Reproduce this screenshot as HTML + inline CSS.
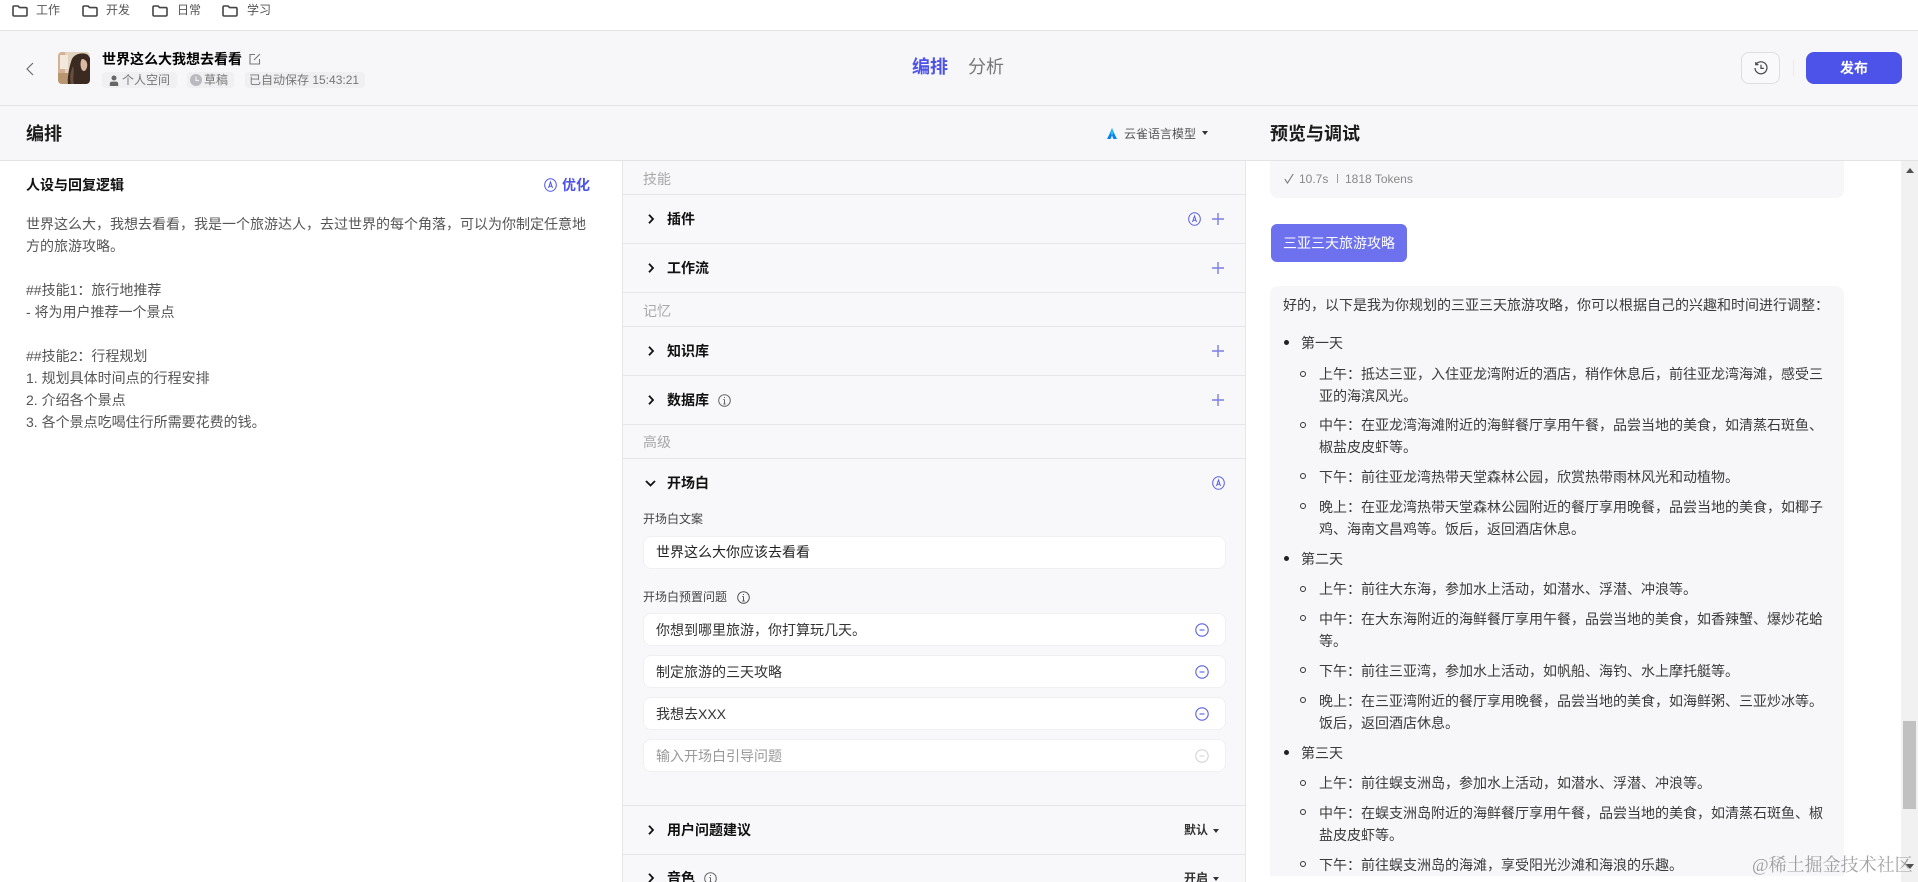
<!DOCTYPE html>
<html lang="zh"><head><meta charset="utf-8"><title>编排</title>
<style>
*{box-sizing:border-box}
html,body{margin:0;padding:0;width:1918px;height:882px;overflow:hidden;background:#fff}
body{position:relative;font-family:"Liberation Sans","Noto Sans CJK SC",sans-serif;font-size:14px;color:#333}
.b{position:absolute}
.t{position:absolute;white-space:nowrap;line-height:22px;height:22px}
.f{font-size:12px;color:#555}
.h{font-weight:700;color:#111}
.l{color:#a8a8a8}
.p{color:#555}
.c{color:#3a3a3a}
.hr{position:absolute;left:623px;width:623px;height:1px;background:#e6e6ea}
.inp{position:absolute;left:643px;width:583px;height:33px;background:#fff;border:1px solid #f0f0f3;border-radius:8px}
svg{position:absolute;overflow:visible}
.dot{position:absolute;width:5px;height:5px;border-radius:50%;background:#222}
.cir{position:absolute;width:6px;height:6px;border-radius:50%;border:1px solid #333}
</style></head><body>

<!-- bookmarks bar -->
<div class="b" style="left:0;top:30px;width:1918px;height:1px;background:#e3e3e6"></div>
<svg style="left:12px;top:5px" width="16" height="12" viewBox="0 0 16 12" fill="none" stroke="#444" stroke-width="1.6" stroke-linejoin="round"><path d="M1 2.2Q1 1 2.2 1H6L7.6 2.6H13.8Q15 2.6 15 3.8V9.8Q15 11 13.8 11H2.2Q1 11 1 9.8Z"/></svg>
<span class="t f" style="left:36px;top:-1px">工作</span>
<svg style="left:82px;top:5px" width="16" height="12" viewBox="0 0 16 12" fill="none" stroke="#444" stroke-width="1.6" stroke-linejoin="round"><path d="M1 2.2Q1 1 2.2 1H6L7.6 2.6H13.8Q15 2.6 15 3.8V9.8Q15 11 13.8 11H2.2Q1 11 1 9.8Z"/></svg>
<span class="t f" style="left:106px;top:-1px">开发</span>
<svg style="left:152px;top:5px" width="16" height="12" viewBox="0 0 16 12" fill="none" stroke="#444" stroke-width="1.6" stroke-linejoin="round"><path d="M1 2.2Q1 1 2.2 1H6L7.6 2.6H13.8Q15 2.6 15 3.8V9.8Q15 11 13.8 11H2.2Q1 11 1 9.8Z"/></svg>
<span class="t f" style="left:177px;top:-1px">日常</span>
<svg style="left:222px;top:5px" width="16" height="12" viewBox="0 0 16 12" fill="none" stroke="#444" stroke-width="1.6" stroke-linejoin="round"><path d="M1 2.2Q1 1 2.2 1H6L7.6 2.6H13.8Q15 2.6 15 3.8V9.8Q15 11 13.8 11H2.2Q1 11 1 9.8Z"/></svg>
<span class="t f" style="left:247px;top:-1px">学习</span>

<!-- header -->
<div class="b" style="left:0;top:31px;width:1918px;height:129px;background:#f7f7fa"></div>
<div class="b" style="left:0;top:105px;width:1918px;height:1px;background:#e3e3e6"></div>
<div class="b" style="left:0;top:160px;width:1918px;height:1px;background:#e3e3e6"></div>

<svg style="left:26px;top:62px" width="8" height="14" viewBox="0 0 8 14" fill="none" stroke="#666" stroke-width="1.1"><path d="M7 1L1 7L7 13"/></svg>

<svg style="left:58px;top:52px;border-radius:4px;overflow:hidden" width="32" height="32" viewBox="0 0 32 32">
<rect width="32" height="32" fill="#e2d3be"/>
<rect x="0" y="0" width="7" height="32" fill="#d6b096"/>
<rect x="2" y="3" width="8" height="14" fill="#f1e9dc"/>
<rect x="0" y="21" width="10" height="11" fill="#b9966e"/>
<path d="M10 32C9 24 12 12 14 7C17 1 26 0 30 3L32 6V32Z" fill="#3a2a22"/>
<path d="M24 7C28 7 30 11 29 15C28 19 26 20 24 18C22 15 22 9 24 7Z" fill="#dcb8a2"/>
<path d="M15 14C17 20 14 26 16 32H13C11 26 13 18 15 14Z" fill="#6b4f3f"/>
</svg>

<span class="t h" style="left:102px;top:48px;color:#000">世界这么大我想去看看</span>
<svg style="left:249px;top:53px" width="12" height="12" viewBox="0 0 12 12" fill="none" stroke="#777" stroke-width="1.1"><path d="M6 1.5H1V11H10.5V6"/><path d="M5 7L11 1"/></svg>

<div class="b" style="left:102px;top:72px;width:75px;height:16px;background:#f0f0f3;border-radius:3px"></div>
<svg style="left:109px;top:75px" width="10" height="11" viewBox="0 0 10 11" fill="#666"><circle cx="5" cy="3" r="2.5"/><path d="M0.8 11V8.8Q0.8 6.6 3 6.6H7Q9.2 6.6 9.2 8.8V11Z"/></svg>
<span class="t f" style="left:122px;top:69px;color:#777">个人空间</span>
<div class="b" style="left:187px;top:72px;width:47px;height:16px;background:#f0f0f3;border-radius:3px"></div>
<svg style="left:190px;top:74px" width="12" height="12" viewBox="0 0 12 12"><circle cx="6" cy="6" r="6" fill="#b9b9bf"/><path d="M6 2.5V6.5H9" stroke="#f0f0f3" stroke-width="1.2" fill="none"/></svg>
<span class="t f" style="left:204px;top:69px;color:#777">草稿</span>
<div class="b" style="left:245px;top:72px;width:120px;height:16px;background:#f0f0f3;border-radius:3px"></div>
<span class="t f" style="left:249px;top:69px;color:#777">已自动保存 15:43:21</span>

<span class="t" style="left:912px;top:56px;font-size:18px;font-weight:700;color:#4d53e8">编排</span>
<span class="t" style="left:968px;top:56px;font-size:18px;color:#777">分析</span>

<div class="b" style="left:1741px;top:52px;width:39px;height:32px;border:1px solid #dedee2;border-radius:8px;background:#f9f9fb"></div>
<svg style="left:1754px;top:61px" width="14" height="14" viewBox="0 0 14 14" fill="none" stroke="#444" stroke-width="1.2"><path d="M2.2 3.2A6 6 0 1 1 1 7"/><path d="M1.8 1V3.6H4.4"/><path d="M7 3.8V7.4H9.8"/></svg>
<div class="b" style="left:1793px;top:60px;width:1px;height:16px;background:#ececef"></div>
<div class="b" style="left:1806px;top:52px;width:96px;height:32px;border-radius:8px;background:#4d53e8"></div>
<span class="t" style="left:1840px;top:57px;font-weight:700;color:#fff">发布</span>

<!-- panel titles -->
<span class="t" style="left:26px;top:123px;font-size:18px;font-weight:700;color:#1c1c1c">编排</span>
<svg style="left:1107px;top:128px" width="10" height="11" viewBox="0 0 11 12"><path d="M5.5 0L8 6L11 12H7L5.5 8L4 12H0L3 6Z" fill="#0a84e8"/><path d="M5.5 0L7 6L5.5 8L4 6Z" fill="#27c6f0"/></svg>
<span class="t f" style="left:1124px;top:123px;color:#555">云雀语言模型</span>
<svg style="left:1202px;top:131px" width="6" height="4" viewBox="0 0 6 4"><path d="M0 0H6L3 4Z" fill="#333"/></svg>
<span class="t" style="left:1270px;top:123px;font-size:18px;font-weight:700;color:#1c1c1c">预览与调试</span>

<!-- left column -->
<span class="t h" style="left:26px;top:174px;color:#111">人设与回复逻辑</span>
<svg style="left:544px;top:178px" width="13" height="14" viewBox="0 0 13 14" fill="none" stroke="#4d53e8" stroke-width="1"><ellipse cx="6.5" cy="7" rx="5.8" ry="6.3"/><path d="M4.5 10L6.5 4L8.5 10M5.1 8.2H7.9"/></svg>
<span class="t" style="left:562px;top:174px;font-weight:700;color:#4d53e8">优化</span>
<span class="t p" style="left:26px;top:213px">世界这么大，我想去看看，我是一个旅游达人，去过世界的每个角落，可以为你制定任意地</span>
<span class="t p" style="left:26px;top:235px">方的旅游攻略。</span>
<span class="t p" style="left:26px;top:279px">##技能1：旅行地推荐</span>
<span class="t p" style="left:26px;top:301px">- 将为用户推荐一个景点</span>
<span class="t p" style="left:26px;top:345px">##技能2：行程规划</span>
<span class="t p" style="left:26px;top:367px">1. 规划具体时间点的行程安排</span>
<span class="t p" style="left:26px;top:389px">2. 介绍各个景点</span>
<span class="t p" style="left:26px;top:411px">3. 各个景点吃喝住行所需要花费的钱。</span>

<!-- middle column -->
<div class="b" style="left:622px;top:161px;width:624px;height:721px;background:#f8f8fb;border-left:1px solid #e6e6ea;border-right:1px solid #e6e6ea"></div>
<span class="t l" style="left:643px;top:168px">技能</span>
<div class="hr" style="top:194px"></div>
<svg style="left:648px;top:214px" width="6" height="10" viewBox="0 0 6 10" fill="none" stroke="#111" stroke-width="1.8"><path d="M1 .8L5 5L1 9.2"/></svg>
<span class="t h" style="left:667px;top:208px">插件</span>
<svg style="left:1188px;top:212px" width="13" height="14" viewBox="0 0 13 14" fill="none" stroke="#5a5fe0" stroke-width="1"><ellipse cx="6.5" cy="7" rx="5.8" ry="6.3"/><path d="M4.5 10L6.5 4L8.5 10M5.1 8.2H7.9"/></svg>
<svg style="left:1212px;top:213px" width="12" height="12" viewBox="0 0 12 12" stroke="#7a7ee4" stroke-width="1.4"><path d="M6 0V12M0 6H12"/></svg>
<div class="hr" style="top:243px"></div>
<svg style="left:648px;top:263px" width="6" height="10" viewBox="0 0 6 10" fill="none" stroke="#111" stroke-width="1.8"><path d="M1 .8L5 5L1 9.2"/></svg>
<span class="t h" style="left:667px;top:257px">工作流</span>
<svg style="left:1212px;top:262px" width="12" height="12" viewBox="0 0 12 12" stroke="#7a7ee4" stroke-width="1.4"><path d="M6 0V12M0 6H12"/></svg>
<div class="hr" style="top:292px"></div>
<span class="t l" style="left:643px;top:300px">记忆</span>
<div class="hr" style="top:326px"></div>
<svg style="left:648px;top:346px" width="6" height="10" viewBox="0 0 6 10" fill="none" stroke="#111" stroke-width="1.8"><path d="M1 .8L5 5L1 9.2"/></svg>
<span class="t h" style="left:667px;top:340px">知识库</span>
<svg style="left:1212px;top:345px" width="12" height="12" viewBox="0 0 12 12" stroke="#7a7ee4" stroke-width="1.4"><path d="M6 0V12M0 6H12"/></svg>
<div class="hr" style="top:375px"></div>
<svg style="left:648px;top:395px" width="6" height="10" viewBox="0 0 6 10" fill="none" stroke="#111" stroke-width="1.8"><path d="M1 .8L5 5L1 9.2"/></svg>
<span class="t h" style="left:667px;top:389px">数据库</span>
<svg style="left:718px;top:394px" width="13" height="13" viewBox="0 0 13 13" fill="none" stroke="#666" stroke-width="1"><circle cx="6.5" cy="6.5" r="5.8"/><path d="M6.5 5.5V10M5.3 5.5H6.5M5.3 10H7.7M6.5 3V4"/></svg>
<svg style="left:1212px;top:394px" width="12" height="12" viewBox="0 0 12 12" stroke="#7a7ee4" stroke-width="1.4"><path d="M6 0V12M0 6H12"/></svg>
<div class="hr" style="top:424px"></div>
<span class="t l" style="left:643px;top:431px">高级</span>
<div class="hr" style="top:458px"></div>
<svg style="left:645px;top:480px" width="11" height="7" viewBox="0 0 11 7" fill="none" stroke="#111" stroke-width="1.8"><path d="M1 1L5.5 5.5L10 1"/></svg>
<span class="t h" style="left:667px;top:472px">开场白</span>
<svg style="left:1212px;top:476px" width="13" height="14" viewBox="0 0 13 14" fill="none" stroke="#5a5fe0" stroke-width="1"><ellipse cx="6.5" cy="7" rx="5.8" ry="6.3"/><path d="M4.5 10L6.5 4L8.5 10M5.1 8.2H7.9"/></svg>

<span class="t f" style="left:643px;top:508px;color:#444">开场白文案</span>
<div class="inp" style="top:536px"></div>
<span class="t" style="left:656px;top:541px;color:#222">世界这么大你应该去看看</span>

<span class="t f" style="left:643px;top:586px;color:#444">开场白预置问题</span>
<svg style="left:737px;top:591px" width="13" height="13" viewBox="0 0 13 13" fill="none" stroke="#555" stroke-width="1"><circle cx="6.5" cy="6.5" r="5.8"/><path d="M6.5 5.5V10M5.3 5.5H6.5M5.3 10H7.7M6.5 3V4"/></svg>

<div class="inp" style="top:613px"></div>
<span class="t" style="left:656px;top:619px;color:#333">你想到哪里旅游，你打算玩几天。</span>
<svg style="left:1195px;top:623px" width="14" height="14" viewBox="0 0 14 14" fill="none" stroke="#5a5fe0" stroke-width="1.1"><circle cx="7" cy="7" r="6.2"/><path d="M4.5 7H9.5"/></svg>
<div class="inp" style="top:655px"></div>
<span class="t" style="left:656px;top:661px;color:#333">制定旅游的三天攻略</span>
<svg style="left:1195px;top:665px" width="14" height="14" viewBox="0 0 14 14" fill="none" stroke="#5a5fe0" stroke-width="1.1"><circle cx="7" cy="7" r="6.2"/><path d="M4.5 7H9.5"/></svg>
<div class="inp" style="top:697px"></div>
<span class="t" style="left:656px;top:703px;color:#333">我想去XXX</span>
<svg style="left:1195px;top:707px" width="14" height="14" viewBox="0 0 14 14" fill="none" stroke="#5a5fe0" stroke-width="1.1"><circle cx="7" cy="7" r="6.2"/><path d="M4.5 7H9.5"/></svg>
<div class="inp" style="top:739px"></div>
<span class="t" style="left:656px;top:745px;color:#999">输入开场白引导问题</span>
<svg style="left:1195px;top:749px" width="14" height="14" viewBox="0 0 14 14" fill="none" stroke="#d4d4d8" stroke-width="1.1"><circle cx="7" cy="7" r="6.2"/><path d="M4.5 7H9.5"/></svg>

<div class="hr" style="top:805px"></div>
<svg style="left:648px;top:825px" width="6" height="10" viewBox="0 0 6 10" fill="none" stroke="#111" stroke-width="1.8"><path d="M1 .8L5 5L1 9.2"/></svg>
<span class="t h" style="left:667px;top:819px">用户问题建议</span>
<span class="t f" style="left:1184px;top:819px;color:#333;font-weight:700">默认</span>
<svg style="left:1213px;top:829px" width="6" height="4" viewBox="0 0 6 4"><path d="M0 0H6L3 4Z" fill="#333"/></svg>
<div class="hr" style="top:854px"></div>
<svg style="left:648px;top:873px" width="6" height="10" viewBox="0 0 6 10" fill="none" stroke="#111" stroke-width="1.8"><path d="M1 .8L5 5L1 9.2"/></svg>
<span class="t h" style="left:667px;top:867px">音色</span>
<svg style="left:704px;top:872px" width="13" height="13" viewBox="0 0 13 13" fill="none" stroke="#666" stroke-width="1"><circle cx="6.5" cy="6.5" r="5.8"/><path d="M6.5 5.5V10M5.3 5.5H6.5M5.3 10H7.7M6.5 3V4"/></svg>
<span class="t f" style="left:1184px;top:867px;color:#333;font-weight:700">开启</span>
<svg style="left:1213px;top:877px" width="6" height="4" viewBox="0 0 6 4"><path d="M0 0H6L3 4Z" fill="#333"/></svg>

<!-- right column -->
<div class="b" style="left:1270px;top:161px;width:574px;height:37px;background:#f7f7fa;border-radius:0 0 8px 8px"></div>
<svg style="left:1284px;top:173px" width="10" height="11" viewBox="0 0 10 11" fill="none" stroke="#777" stroke-width="1.1"><path d="M.8 6L3.5 10L9.2 1"/></svg>
<span class="t f" style="left:1299px;top:168px;color:#888">10.7s</span>
<div class="b" style="left:1337px;top:174px;width:1px;height:9px;background:#999"></div>
<span class="t f" style="left:1345px;top:168px;color:#888">1818 Tokens</span>

<div class="b" style="left:1271px;top:224px;width:136px;height:38px;background:#6d71ee;border-radius:6px"></div>
<span class="t" style="left:1283px;top:232px;color:#fff">三亚三天旅游攻略</span>

<div class="b" style="left:1270px;top:286px;width:574px;height:590px;background:#f7f7fa;border-radius:8px 8px 0 0"></div>
<span class="t c" style="left:1283px;top:294px">好的，以下是我为你规划的三亚三天旅游攻略，你可以根据自己的兴趣和时间进行调整：</span>

<div class="dot" style="left:1284px;top:340px"></div><span class="t c" style="left:1301px;top:332px">第一天</span>
<div class="cir" style="left:1300px;top:371px"></div><span class="t c" style="left:1319px;top:363px">上午：抵达三亚，入住亚龙湾附近的酒店，稍作休息后，前往亚龙湾海滩，感受三</span>
<span class="t c" style="left:1319px;top:385px">亚的海滨风光。</span>
<div class="cir" style="left:1300px;top:422px"></div><span class="t c" style="left:1319px;top:414px">中午：在亚龙湾海滩附近的海鲜餐厅享用午餐，品尝当地的美食，如清蒸石斑鱼、</span>
<span class="t c" style="left:1319px;top:436px">椒盐皮皮虾等。</span>
<div class="cir" style="left:1300px;top:473px"></div><span class="t c" style="left:1319px;top:466px">下午：前往亚龙湾热带天堂森林公园，欣赏热带雨林风光和动植物。</span>
<div class="cir" style="left:1300px;top:503px"></div><span class="t c" style="left:1319px;top:496px">晚上：在亚龙湾热带天堂森林公园附近的餐厅享用晚餐，品尝当地的美食，如椰子</span>
<span class="t c" style="left:1319px;top:518px">鸡、海南文昌鸡等。饭后，返回酒店休息。</span>
<div class="dot" style="left:1284px;top:556px"></div><span class="t c" style="left:1301px;top:548px">第二天</span>
<div class="cir" style="left:1300px;top:586px"></div><span class="t c" style="left:1319px;top:578px">上午：前往大东海，参加水上活动，如潜水、浮潜、冲浪等。</span>
<div class="cir" style="left:1300px;top:615px"></div><span class="t c" style="left:1319px;top:608px">中午：在大东海附近的海鲜餐厅享用午餐，品尝当地的美食，如香辣蟹、爆炒花蛤</span>
<span class="t c" style="left:1319px;top:630px">等。</span>
<div class="cir" style="left:1300px;top:667px"></div><span class="t c" style="left:1319px;top:660px">下午：前往三亚湾，参加水上活动，如帆船、海钓、水上摩托艇等。</span>
<div class="cir" style="left:1300px;top:697px"></div><span class="t c" style="left:1319px;top:690px">晚上：在三亚湾附近的餐厅享用晚餐，品尝当地的美食，如海鲜粥、三亚炒冰等。</span>
<span class="t c" style="left:1319px;top:712px">饭后，返回酒店休息。</span>
<div class="dot" style="left:1284px;top:750px"></div><span class="t c" style="left:1301px;top:742px">第三天</span>
<div class="cir" style="left:1300px;top:780px"></div><span class="t c" style="left:1319px;top:772px">上午：前往蜈支洲岛，参加水上活动，如潜水、浮潜、冲浪等。</span>
<div class="cir" style="left:1300px;top:809px"></div><span class="t c" style="left:1319px;top:802px">中午：在蜈支洲岛附近的海鲜餐厅享用午餐，品尝当地的美食，如清蒸石斑鱼、椒</span>
<span class="t c" style="left:1319px;top:824px">盐皮皮虾等。</span>
<div class="cir" style="left:1300px;top:861px"></div><span class="t c" style="left:1319px;top:854px">下午：前往蜈支洲岛的海滩，享受阳光沙滩和海浪的乐趣。</span>

<!-- scrollbar -->
<div class="b" style="left:1901px;top:161px;width:17px;height:721px;background:#f1f1f1"></div>
<svg style="left:1906px;top:168px" width="8" height="5" viewBox="0 0 8 5"><path d="M0 5H8L4 0Z" fill="#505050"/></svg>
<div class="b" style="left:1903px;top:721px;width:13px;height:88px;background:#c1c1c1"></div>
<svg style="left:1906px;top:864px" width="8" height="5" viewBox="0 0 8 5"><path d="M0 0H8L4 5Z" fill="#505050"/></svg>

<!-- watermark -->
<span class="t" style="left:1752px;top:854px;font-size:18px;font-family:'Liberation Serif','Noto Serif CJK SC',serif;color:rgba(100,100,100,.6)">@稀土掘金技术社区</span>

</body></html>
